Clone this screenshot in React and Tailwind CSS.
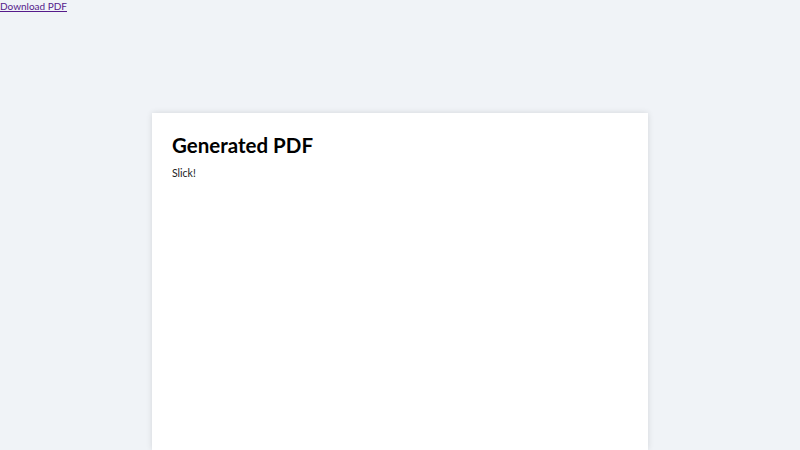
export default function App() {
  return (
    <div className="h-[450px] overflow-hidden bg-[#f0f3f7] font-['Lato',sans-serif]">
      <a href="#" className="block w-fit text-[10px] leading-[13px] text-[#551a8b] underline">Download PDF</a>
      <div className="mx-auto mt-[100px] h-[337px] w-[496px] bg-white px-5 pt-[18px] shadow-[0_0_6px_rgba(0,0,0,0.12)]">
        <h1 className="text-[20.5px] font-bold leading-[28px] text-black">Generated PDF</h1>
        <p className="mt-[7px] text-[10.5px] leading-[14px] text-[#222]">Slick!</p>
      </div>
    </div>
  );
}
